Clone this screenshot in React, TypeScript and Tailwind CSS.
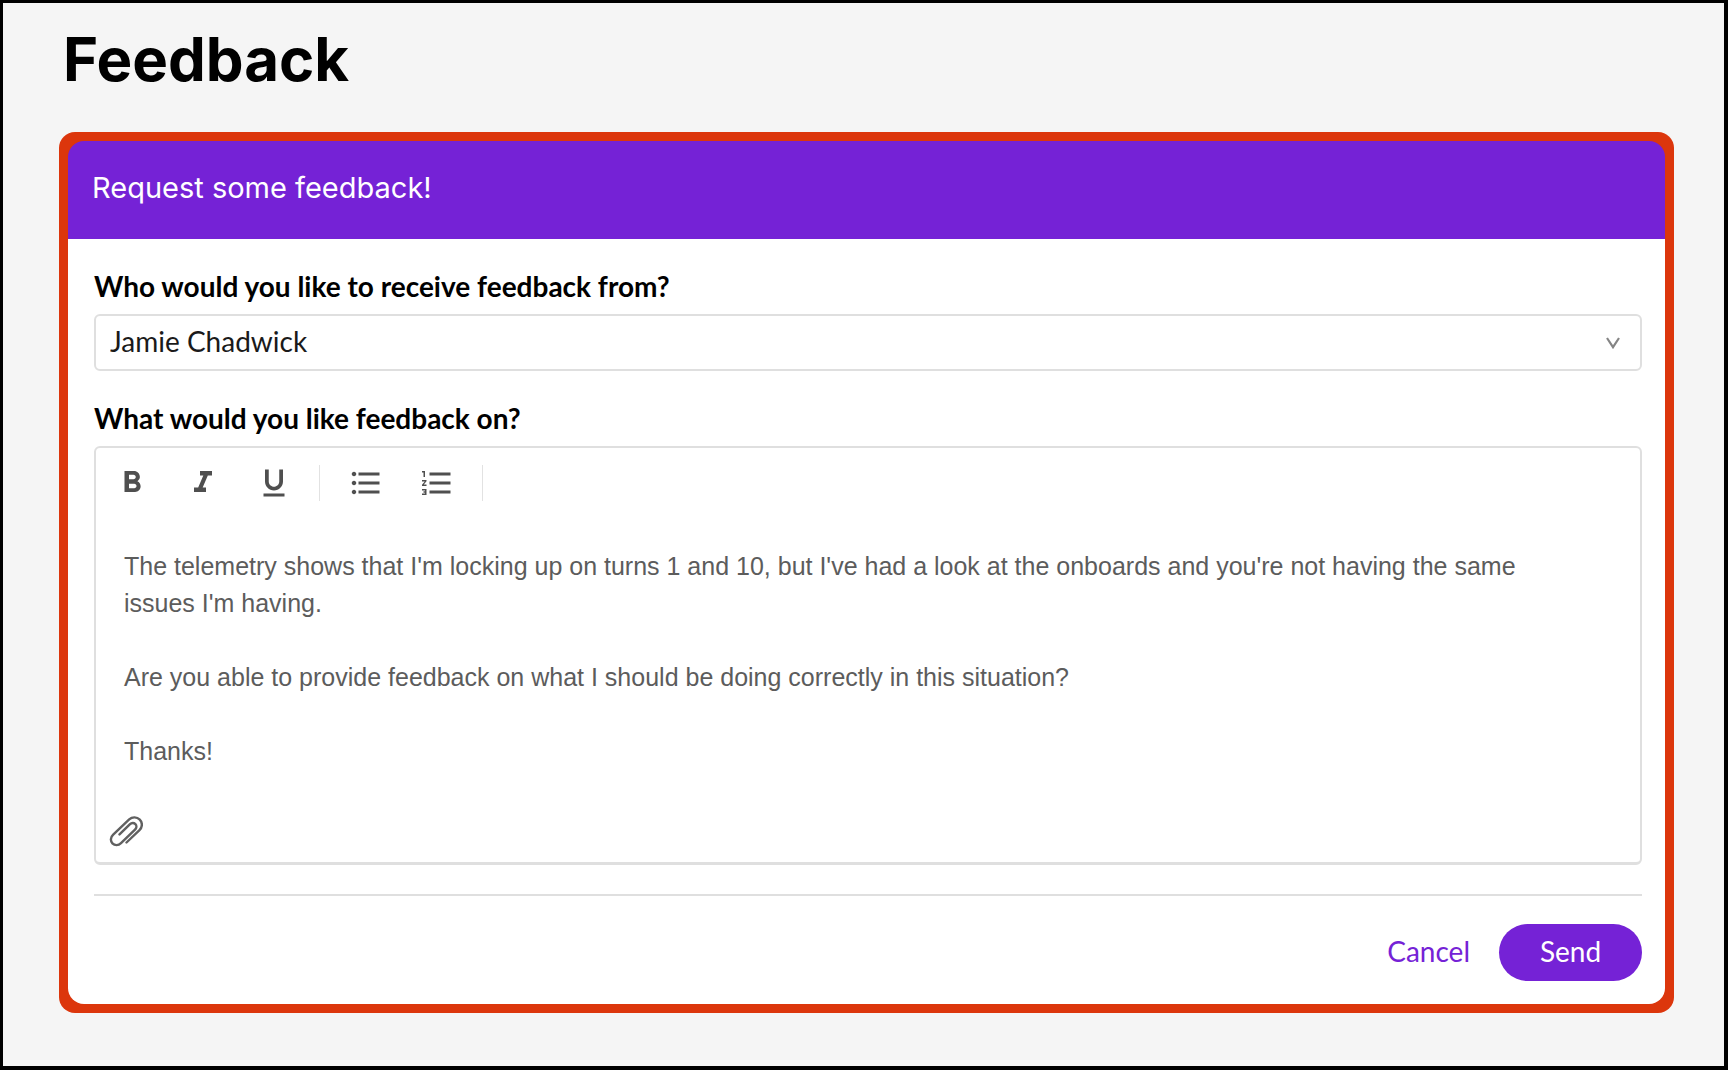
import { useState } from "react";
import {
  MdFormatBold,
  MdFormatItalic,
  MdFormatListBulleted,
  MdFormatListNumbered,
  MdFormatUnderlined,
} from "react-icons/md";

const people = ["Jamie Chadwick", "Alice Powell", "Abbi Pulling"];

const initialMessage = `The telemetry shows that I'm locking up on turns 1 and 10, but I've had a look at the onboards and you're not having the same issues I'm having.

Are you able to provide feedback on what I should be doing correctly in this situation?

Thanks!`;

// Toolbar buttons, grouped the way the dividers split them
const toolbarGroups = [
  [
    { label: "Bold", icon: MdFormatBold },
    { label: "Italic", icon: MdFormatItalic },
    { label: "Underline", icon: MdFormatUnderlined },
  ],
  [
    { label: "Bulleted list", icon: MdFormatListBulleted },
    { label: "Numbered list", icon: MdFormatListNumbered },
  ],
];

function ChevronIcon() {
  return (
    <svg
      viewBox="0 0 14 12"
      className="pointer-events-none absolute right-[22px] h-3 w-[14px]"
      fill="none"
      stroke="#858585"
      strokeWidth="2.2"
    >
      <path d="M1 1 L7 10.2 L13 1" />
    </svg>
  );
}

function PaperclipIcon() {
  return (
    <svg
      viewBox="0 0 34 32"
      className="h-8 w-[34px]"
      fill="none"
      stroke="#606060"
      strokeWidth="2.4"
      strokeLinecap="round"
    >
      <path d="M17.5 27.5 L30.5 15.2 C33.6 12.2 33.6 7.4 30.8 4.6 C27.9 1.7 23.2 1.6 20.2 4.4 L4.2 19.6 C1.4 22.2 1.2 26 3.4 28.3 C5.7 30.7 9.4 30.7 12 28.2 L26 14.6 C27.7 13 27.8 10.6 26.4 9.1 C24.9 7.6 22.6 7.6 21 9.2 L10.5 19.4" />
    </svg>
  );
}

function Toolbar() {
  return (
    <div className="flex h-[70px] items-center" role="toolbar" aria-label="Formatting">
      {toolbarGroups.map((group, index) => (
        <div key={index} className="flex items-center">
          {group.map(({ label, icon: Icon }) => (
            <button
              key={label}
              type="button"
              aria-label={label}
              className="flex h-9 w-[71px] items-center justify-center text-[#4f4f4f]"
            >
              <Icon size={36} />
            </button>
          ))}
          <div className="mx-[10px] h-9 w-px bg-[#e2e2e2]" />
        </div>
      ))}
    </div>
  );
}

export default function App() {
  const [person, setPerson] = useState(people[0]);
  const [message, setMessage] = useState(initialMessage);

  return (
    <main className="min-h-screen border-t-[3px] border-r-4 border-b-4 border-l-[3px] border-black bg-[#f5f5f5] pt-5 pr-[50px] pb-12 pl-14 font-['Lato',sans-serif]">
      <h1 className="pl-1 font-['Inter',sans-serif] text-[60px] leading-[72px] font-bold text-black">
        Feedback
      </h1>

      <form
        className="mt-[37px] rounded-2xl bg-[#dc360c] p-[9px]"
        onSubmit={(e) => e.preventDefault()}
      >
        <div className="flex h-[98px] items-center rounded-t-2xl bg-[#7522d6] px-6 pb-1">
          <h2 className="font-['Inter',sans-serif] text-[29px] leading-9 text-white">
            Request some feedback!
          </h2>
        </div>

        <div className="rounded-b-2xl bg-white pt-[27px] pr-[23px] pb-[23px] pl-[26px]">
          <label htmlFor="person" className="block text-[28px] leading-10 font-bold text-black">
            Who would you like to receive feedback from?
          </label>
          <div className="relative mt-2 flex items-center">
            <select
              id="person"
              value={person}
              onChange={(e) => setPerson(e.target.value)}
              className="h-[57px] w-full appearance-none rounded-md border-2 border-[#dfdfdf] bg-white px-[14px] pb-1 text-[28px] text-[#1a1a1a]"
            >
              {people.map((name) => (
                <option key={name}>{name}</option>
              ))}
            </select>
            <ChevronIcon />
          </div>

          <label htmlFor="message" className="mt-[27px] block text-[28px] leading-10 font-bold text-black">
            What would you like feedback on?
          </label>
          <div className="mt-2 rounded-md border-2 border-b-[3px] border-[#dfdfdf]">
            <Toolbar />
            <textarea
              id="message"
              value={message}
              onChange={(e) => setMessage(e.target.value)}
              className="mt-[30px] block h-[267px] w-full resize-none pr-16 pl-7 font-['Liberation_Sans',sans-serif] text-[25px] leading-[37px] text-[#5c5c5c] outline-none"
            />
            <button type="button" aria-label="Attach file" className="mb-[15px] ml-[13px] block">
              <PaperclipIcon />
            </button>
          </div>

          <div className="mt-[29px] flex items-center justify-end gap-[29px] border-t-2 border-[#dfdfdf] pt-7">
            <button type="button" className="pb-[3px] text-[28px] text-[#7522d6]">
              Cancel
            </button>
            <button
              type="submit"
              className="h-[57px] w-[143px] rounded-full bg-[#7522d6] pb-[3px] text-[28px] text-white"
            >
              Send
            </button>
          </div>
        </div>
      </form>
    </main>
  );
}
